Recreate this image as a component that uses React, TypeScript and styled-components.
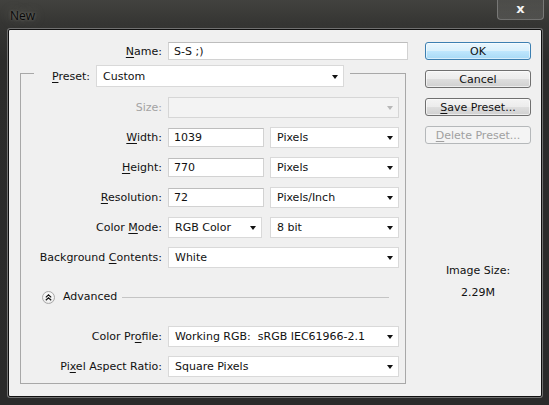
import React from "react";
import styled, {createGlobalStyle} from "styled-components";

const GlobalStyle = createGlobalStyle`
  html, body {
    margin: 0;
    padding: 0;
    background: #2a2a2a;
  }
  body {
    font-family: "DejaVu Sans", "Liberation Sans", sans-serif;
    font-size: 11px;
    color: #111;
  }
  u {
    text-decoration: underline;
    text-underline-offset: 2px;
  }
`;

const Window = styled.div`
  width: 549px;
  height: 405px;
  box-sizing: border-box;
  display: flex;
  flex-direction: column;
  background: linear-gradient(180deg, #42423f 0px, #353533 24px, #2c2c2b 60px, #2a2a2a 100%);
  overflow: hidden;
`;

const TitleBar = styled.div`
  height: 29px;
  display: flex;
  justify-content: space-between;
  align-items: flex-start;
  flex-shrink: 0;
`;

const Title = styled.div`
  height: 29px;
  padding: 2px 0 0 10px;
  box-sizing: border-box;
  display: flex;
  align-items: center;
  font-family: "Open Sans", "DejaVu Sans", sans-serif;
  font-size: 12px;
  color: #080808;
  text-shadow: 0 0 3px rgba(190, 190, 180, 0.5), 0 0 12px rgba(200, 200, 190, 0.35);
`;

const CloseButton = styled.div`
  width: 47px;
  height: 20px;
  margin-right: 5px;
  box-sizing: border-box;
  border: 1px solid rgba(200, 200, 200, 0.35);
  border-top: none;
  border-radius: 0 0 4px 4px;
  background: linear-gradient(180deg, rgba(255, 255, 255, 0.06), rgba(255, 255, 255, 0.12));
  display: flex;
  align-items: center;
  justify-content: center;
  color: #f4f4f4;
  font-family: "DejaVu Sans", sans-serif;
  font-weight: bold;
  font-size: 13px;
  line-height: 1;
  padding-bottom: 2px;
`;

const Client = styled.div`
  margin: 0 7px 0 8px;
  height: 368px;
  box-sizing: border-box;
  border: 1px solid #101010;
  box-shadow: 0 0 0 1px #707070;
  border-radius: 2px;
  background: #f0f0f0;
  display: flex;
  padding: 12px 0 0 11px;
`;

const LeftCol = styled.div`
  width: 388px;
  display: flex;
  flex-direction: column;
`;

const RightCol = styled.div`
  width: 106px;
  margin-left: 17px;
  display: flex;
  flex-direction: column;
  gap: 10px;
`;

const NameRow = styled.div`
  display: flex;
  align-items: center;
  gap: 6px;
  height: 18px;
`;

const Label = styled.div<{ $w?: number; $disabled?: boolean }>`
  width: ${p => p.$w ?? 141}px;
  flex-shrink: 0;
  text-align: right;
  white-space: nowrap;
  color: ${p => (p.$disabled ? "#a3a3a3" : "#111")};
`;

const TextInput = styled.div<{ $w: number; $h?: number }>`
  width: ${p => p.$w}px;
  height: ${p => p.$h ?? 19}px;
  box-sizing: border-box;
  background: #fff;
  border: 1px solid #d2d2d2;
  border-top-color: #bdbdbd;
  display: flex;
  align-items: center;
  padding-left: 5px;
  white-space: nowrap;
`;

const Select = styled.div<{ $w: number; $h?: number; $disabled?: boolean; $ml?: number }>`
  width: ${p => p.$w}px;
  height: ${p => p.$h ?? 21}px;
  margin-left: ${p => p.$ml ?? 0}px;
  box-sizing: border-box;
  background: ${p => (p.$disabled ? "#f3f3f3" : "#fff")};
  border: 1px solid ${p => (p.$disabled ? "#d6d6d6" : "#d9d9d9")};
  display: flex;
  align-items: center;
  justify-content: space-between;
  padding: 0 5px 0 6px;
  white-space: nowrap;
`;

const Arrow = styled.span<{ $disabled?: boolean }>`
  width: 0;
  height: 0;
  border-left: 3.5px solid transparent;
  border-right: 3.5px solid transparent;
  border-top: 4px solid ${p => (p.$disabled ? "#b8b8b8" : "#111")};
  margin-top: 1px;
`;

const GroupBox = styled.div`
  margin-top: 13px;
  width: 386px;
  box-sizing: border-box;
  border: 1px solid #a8a8a8;
  display: flex;
  flex-direction: column;
  padding-bottom: 6px;
`;

const Legend = styled.div`
  margin: -9px 0 0 13px;
  align-self: flex-start;
  display: flex;
  align-items: center;
  gap: 6px;
  padding: 0 6px 0 18px;
  background: #f0f0f0;
  height: 22px;
`;

const Rows = styled.div<{ $pt?: number }>`
  padding-top: ${p => p.$pt ?? 0}px;
  display: flex;
  flex-direction: column;
  gap: 9px;
`;

const Row = styled.div`
  display: flex;
  align-items: center;
  gap: 6px;
  height: 21px;
`;

const AdvancedRow = styled.div`
  display: flex;
  align-items: center;
  height: 21px;
  margin: 18px 0 19px;
  padding-left: 21px;
`;

const AdvancedToggle = styled.span`
  width: 13px;
  height: 13px;
  box-sizing: border-box;
  border-radius: 50%;
  border: 1px solid #a9a9a9;
  background: radial-gradient(circle at 50% 35%, #ffffff 0%, #f2f2f2 60%, #dcdcdc 100%);
  display: flex;
  align-items: center;
  justify-content: center;
  margin-top: 1px;
`;

const AdvancedText = styled.span`
  margin-left: 8px;
`;

const Divider = styled.span`
  flex: 1;
  height: 1px;
  background: #c4c4c4;
  margin: 1px 16px 0 5px;
`;

const Button = styled.div<{ $variant?: "default" | "disabled" }>`
  height: 18px;
  box-sizing: border-box;
  border-radius: 3px;
  display: flex;
  align-items: center;
  justify-content: center;
  white-space: nowrap;
  border: 1px solid ${p =>
    p.$variant === "default" ? "#3c7fb1" : p.$variant === "disabled" ? "#b5b8ba" : "#707070"};
  color: ${p => (p.$variant === "disabled" ? "#a0a0a0" : "#111")};
  background: ${p =>
    p.$variant === "default"
      ? "linear-gradient(180deg, #eaf6fd 0%, #d9f0fc 48%, #bee6fd 52%, #a7d9f5 100%)"
      : p.$variant === "disabled"
      ? "#f4f4f4"
      : "linear-gradient(180deg, #f4f4f4 0%, #ececec 48%, #dedede 52%, #d0d0d0 100%)"};
  box-shadow: inset 0 0 0 1px ${p =>
    p.$variant === "default" ? "rgba(255,255,255,0.55)" : p.$variant === "disabled" ? "transparent" : "rgba(255,255,255,0.6)"};
`;

const ImageSizeLabel = styled.div`
  margin-top: 109px;
  line-height: 16px;
  text-align: center;
`;

const ImageSizeValue = styled.div`
  margin-top: -4px;
  line-height: 16px;
  text-align: center;
`;

const Field: React.FC<{ w: number; children?: React.ReactNode; disabled?: boolean; ml?: number }> = ({w, children, disabled, ml}) => (
    <Select $w={w} $disabled={disabled} $ml={ml}>
        <span>{children}</span>
        <Arrow $disabled={disabled}/>
    </Select>
);

const App: React.FC = () => {
    return (
        <>
            <GlobalStyle/>
            <Window>
                <TitleBar>
                    <Title>New</Title>
                    <CloseButton>x</CloseButton>
                </TitleBar>
                <Client>
                    <LeftCol>
                        <NameRow>
                            <Label $w={142}><u>N</u>ame:</Label>
                            <TextInput $w={240} $h={18}>S-S ;)</TextInput>
                        </NameRow>
                        <GroupBox>
                            <Legend>
                                <Label $w={38}><u>P</u>reset:</Label>
                                <Select $w={248} $h={22}>
                                    <span>Custom</span>
                                    <Arrow/>
                                </Select>
                            </Legend>
                            <Rows $pt={10}>
                                <Row>
                                    <Label $disabled>Size:</Label>
                                    <Field w={231} disabled/>
                                </Row>
                                <Row>
                                    <Label><u>W</u>idth:</Label>
                                    <TextInput $w={96}>1039</TextInput>
                                    <Field w={129}>Pixels</Field>
                                </Row>
                                <Row>
                                    <Label><u>H</u>eight:</Label>
                                    <TextInput $w={96}>770</TextInput>
                                    <Field w={129}>Pixels</Field>
                                </Row>
                                <Row>
                                    <Label><u>R</u>esolution:</Label>
                                    <TextInput $w={96}>72</TextInput>
                                    <Field w={129}>Pixels/Inch</Field>
                                </Row>
                                <Row>
                                    <Label>Color <u>M</u>ode:</Label>
                                    <Field w={94}>RGB Color</Field>
                                    <Field w={129} ml={2}>8 bit</Field>
                                </Row>
                                <Row>
                                    <Label>Background <u>C</u>ontents:</Label>
                                    <Field w={231}>White</Field>
                                </Row>
                            </Rows>
                            <AdvancedRow>
                                <AdvancedToggle>
                                    <svg width="7" height="7" viewBox="0 0 7 7">
                                        <path d="M0.8 3.4 L3.5 0.9 L6.2 3.4 M0.8 6.2 L3.5 3.7 L6.2 6.2" fill="none" stroke="#111" strokeWidth="1.2"/>
                                    </svg>
                                </AdvancedToggle>
                                <AdvancedText>Advanced</AdvancedText>
                                <Divider/>
                            </AdvancedRow>
                            <Rows>
                                <Row>
                                    <Label>Color Pr<u>o</u>file:</Label>
                                    <Field w={231}>Working RGB:&nbsp; sRGB IEC61966-2.1</Field>
                                </Row>
                                <Row>
                                    <Label>Pi<u>x</u>el Aspect Ratio:</Label>
                                    <Field w={231}>Square Pixels</Field>
                                </Row>
                            </Rows>
                        </GroupBox>
                    </LeftCol>
                    <RightCol>
                        <Button $variant="default">OK</Button>
                        <Button>Cancel</Button>
                        <Button><span><u>S</u>ave Preset...</span></Button>
                        <Button $variant="disabled"><span><u>D</u>elete Preset...</span></Button>
                        <ImageSizeLabel>Image Size:</ImageSizeLabel>
                        <ImageSizeValue>2.29M</ImageSizeValue>
                    </RightCol>
                </Client>
            </Window>
        </>
    );
};

export default App;
